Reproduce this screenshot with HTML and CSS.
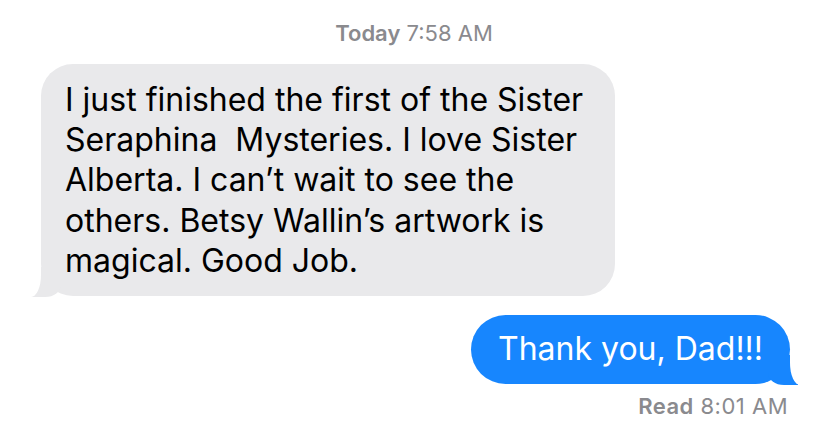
FILE: index.html
```html
<!DOCTYPE html>
<html>
<head>
<meta charset="utf-8">
<link rel="stylesheet" href="styles.css">
</head>
<body>
<div class="thread">
  <div class="stamp"><span class="strong">Today</span> 7:58 AM</div>
  <div class="msg received">I just finished the first of the Sister<br>Seraphina&nbsp; Mysteries. I love Sister<br>Alberta. I can’t wait to see the<br>others. Betsy Wallin’s artwork is<br>magical. Good Job.</div>
  <div class="msg sent">Thank you, Dad!!!</div>
  <div class="status"><span class="strong">Read</span> 8:01 AM</div>
</div>
</body>
</html>
```
FILE: styles.css
```css
html, body {
  margin: 0;
  padding: 0;
  background: #ffffff;
}
body {
  font-family: Inter, "Noto Sans", sans-serif;
  width: 828px;
  height: 445px;
  overflow: hidden;
}
.thread {
  display: flex;
  flex-direction: column;
  padding: 21px 38px 0 41px;
}
.stamp {
  align-self: center;
  margin-left: -3px;
  font-size: 22px;
  line-height: 24px;
  color: #8a8a8e;
  margin-bottom: 19px;
}
.strong {
  font-weight: 600;
}
.msg {
  position: relative;
  font-size: 32px;
  line-height: 40.2px;
  border-radius: 32px;
}
.received {
  align-self: flex-start;
  width: 574px;
  box-sizing: border-box;
  padding: 16px 20px 15px 24px;
  background: #e9e9eb;
  color: #000;
}
.received::before {
  content: "";
  position: absolute;
  bottom: -1px;
  left: -10px;
  width: 30px;
  height: 30px;
  background: #e9e9eb;
  border-bottom-right-radius: 16px 12px;
}
.received::after {
  content: "";
  position: absolute;
  bottom: -1px;
  left: -20px;
  width: 20px;
  height: 30px;
  background: #ffffff;
  border-bottom-right-radius: 10px 22px;
}
.sent {
  align-self: flex-end;
  margin-top: 19px;
  padding: 14px 27px 15px 27px;
  background: #1786fe;
  color: #ffffff;
  border-radius: 35px;
}
.sent::before {
  content: "";
  position: absolute;
  bottom: -1px;
  right: -8px;
  width: 30px;
  height: 30px;
  background: #1786fe;
  border-bottom-left-radius: 16px 12px;
}
.sent::after {
  content: "";
  position: absolute;
  bottom: -1px;
  right: -18px;
  width: 18px;
  height: 30px;
  background: #ffffff;
  border-bottom-left-radius: 10px 22px;
}
.status {
  align-self: flex-end;
  margin-top: 10px;
  margin-right: 2px;
  font-size: 22px;
  line-height: 24px;
  letter-spacing: 0.5px;
  color: #8a8a8e;
}
```
